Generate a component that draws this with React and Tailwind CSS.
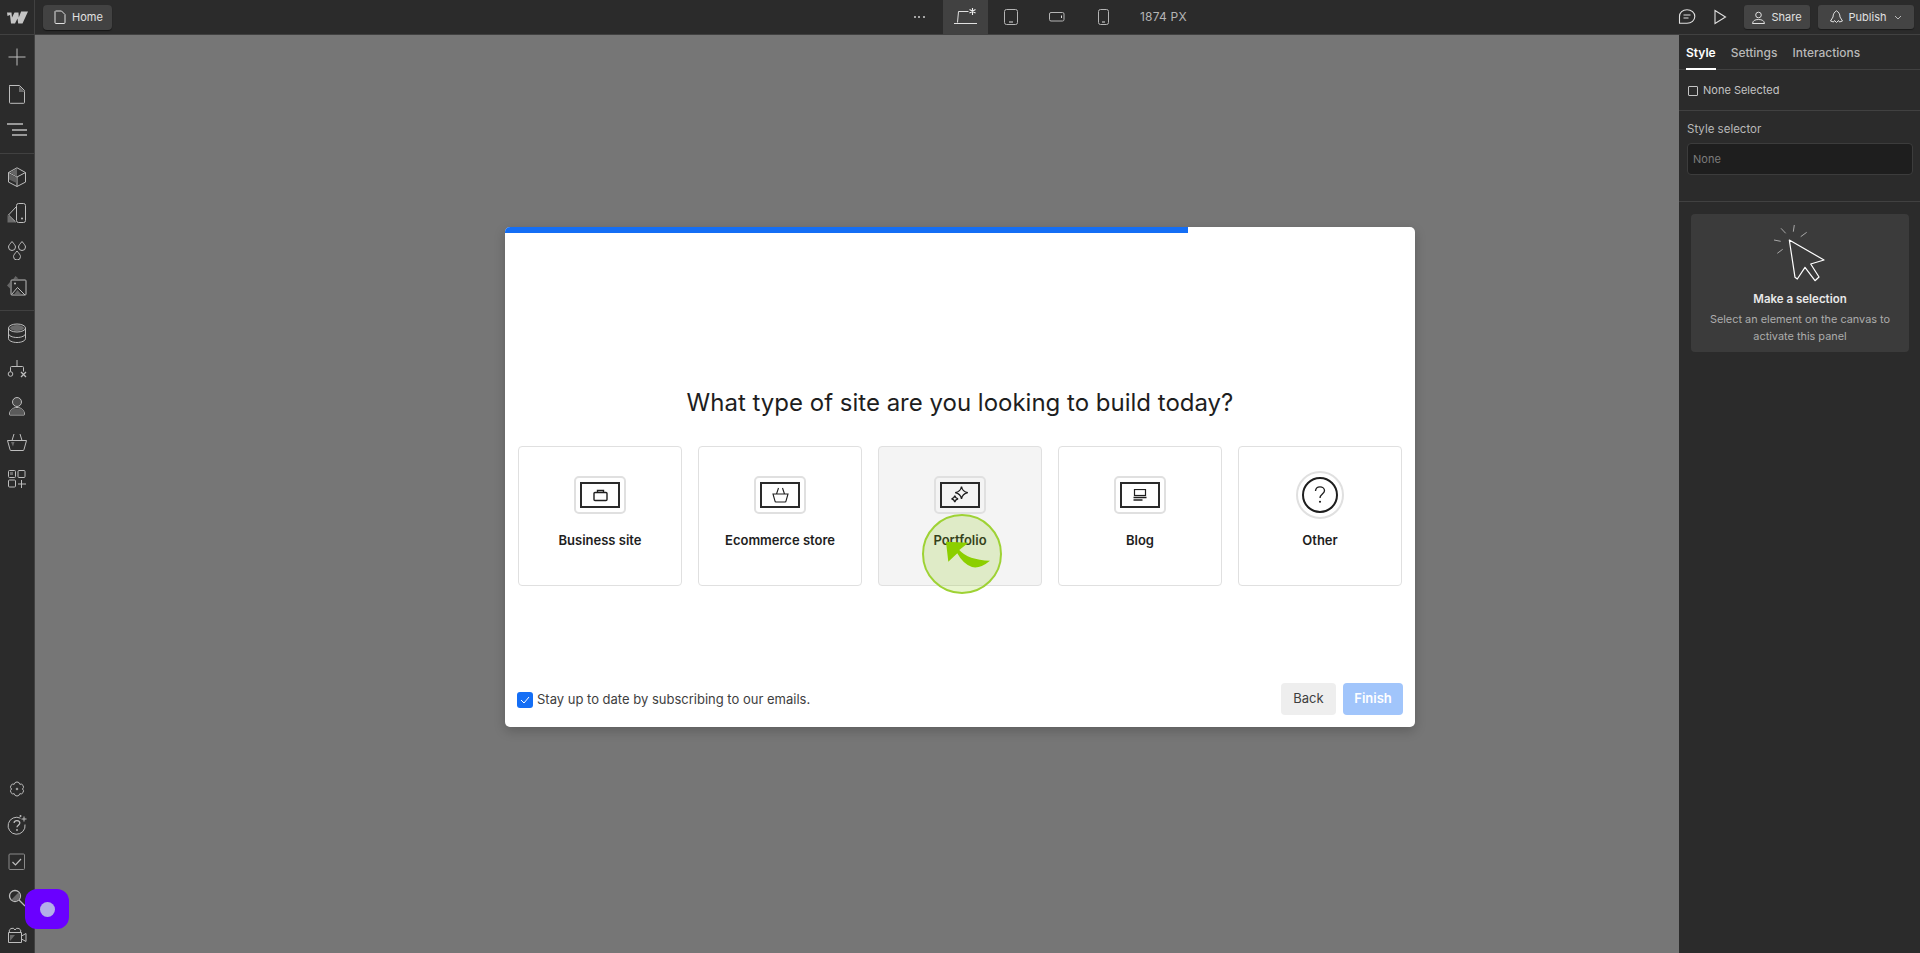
import React from 'react';

const Ic = ({ children, w = 20, h = 20, vb, className = '' }) => (
  <svg width={w} height={h} viewBox={vb || `0 0 ${w} ${h}`} fill="none" stroke="currentColor" strokeWidth="1" className={className}>
    {children}
  </svg>
);

const SideIcon = ({ children }) => (
  <div className="flex h-[36.5px] w-full items-center justify-center text-[#bdbdbd]">
    <Ic>{children}</Ic>
  </div>
);

const topIcons = [
  <path d="M10 1.500v17M1.500 10h17" />,
  <>
    <path d="M2.500 1.500h10l5 5v12a.8.8 0 0 1-.8.8H3.300a.8.8 0 0 1-.8-.8V2.300a.8.8 0 0 1 .8-.8z" />
    <path d="M12 2v6h6z" fill="#6b6b6b" stroke="none" />
  </>,
  <path d="M0 4h16M5 10h15M5 15h15" strokeWidth="1.300" />,
];

const assetIcons = [
  <>
    <path d="M10 .8l8.500 4.700v9.600L10 19.500l-8.500-4.400V5.500z" />
    <path d="M1.500 5.500L10 10l8.500-4.500M10 10v9.500" />
    <path d="M10 1.500L3 5.500 10 9.500z" fill="#666" stroke="none" />
    <path d="M2 6.500l7.500 4v5.500L2 12.500z" fill="#5c5c5c" stroke="none" />
  </>,
  <>
    <path d="M.5 19.500h8.500L.5 12z" fill="#6b6b6b" stroke="none" />
    <rect x="9.500" y=".5" width="9" height="19" rx="2" />
    <path d="M9.500 3.500L1.500 12l7 6.800" />
    <circle cx="15" cy="15.500" r="1" fill="currentColor" stroke="none" />
  </>,
  <>
    <path d="M5 1.500c2 2.500 3.500 4 3.500 5.500a3.500 3.500 0 0 1-7 0c0-1.500 1.500-3 3.500-5.500z" />
    <path d="M15 1.500c2 2.500 3.500 4 3.500 5.500a3.500 3.500 0 0 1-7 0c0-1.500 1.500-3 3.500-5.500z" />
    <path d="M10 11c2 2.500 3.500 4 3.500 5.500a3.500 3.500 0 0 1-7 0c0-1.500 1.500-3 3.500-5.500z" />
  </>,
  <>
    <path d="M6 3.500L8.500 0l3 2.500zM3 6l-3 3.500 3 3z" fill="#666" stroke="none" />
    <rect x="4" y="4" width="15" height="15" rx=".8" />
    <path d="M4.500 18.500l6-7 7.500 7.500" />
    <path d="M7 18.500l3.500-4.500 4 4.500z" fill="#666" stroke="none" />
    <circle cx="8" cy="7.500" r="1" fill="currentColor" stroke="none" />
  </>,
];

const cmsIcons = [
  <>
    <ellipse cx="10" cy="5" rx="8.500" ry="4" />
    <ellipse cx="10" cy="5" rx="7" ry="3" fill="#6a6a6a" stroke="none" />
    <path d="M1.500 5v10.500c0 2.200 3.800 4 8.500 4s8.500-1.800 8.500-4V5M1.500 10.500c0 2.200 3.800 4 8.500 4s8.500-1.800 8.500-4" />
  </>,
  <>
    <path d="M10 1v6M3.500 12.500V8.500a1 1 0 0 1 1-1h11a1 1 0 0 1 1 1v4" />
    <circle cx="3.500" cy="15" r="2.300" />
    <path d="M14 13l5 5M19 13l-5 5" strokeWidth="1.300" />
  </>,
  <>
    <circle cx="10" cy="6" r="4.500" fill="#4c4c4c" />
    <path d="M2.500 18.500c0-4 3-7 7.500-7s7.500 3 7.500 7a.5.5 0 0 1-.5.5H3a.5.5 0 0 1-.5-.5z" />
    <path d="M3 18.500h14c0-3-1-4.500-3-6H6c-2 1.500-3 3-3 6z" fill="#5a5a5a" stroke="none" />
  </>,
  <>
    <path d="M.5 8.500h19l-2.500 9a1 1 0 0 1-1 1H4a1 1 0 0 1-1-1z" />
    <path d="M5 8.500L7 2M15 8.500L13 2" />
    <path d="M4 10h3.500l-1.500 4.500z" fill="#6a6a6a" stroke="none" />
  </>,
  <>
    <rect x="1.500" y="1.500" width="7" height="7" rx="1" />
    <rect x="3" y="3" width="3" height="3" fill="#6a6a6a" stroke="none" />
    <rect x="11" y="1.500" width="7" height="7" rx="1" />
    <rect x="1.500" y="11" width="7" height="7" rx="1" />
    <path d="M14.500 11v8M11 15h8" />
  </>,
];

const bottomIcons = [
  <>
    <path d="M15.500 10A2.800 2.800 0 0 1 12.750 14.760 2.800 2.800 0 0 1 7.250 14.760 2.800 2.800 0 0 1 4.500 10 2.800 2.800 0 0 1 7.250 5.240 2.800 2.800 0 0 1 12.750 5.240 2.800 2.800 0 0 1 15.500 10z" />
    <path d="M8.800 10h2.400M10 8.800v2.400" />
  </>,
  <>
    <path d="M13.500 3.200A8.500 8.500 0 1 0 18 9.500" />
    <path d="M7 7.800c.3-1.500 1.500-2.300 3-2.200 1.600.1 2.800 1 2.800 2.500 0 2-2.800 2.300-2.800 4.200" strokeWidth="1.300" />
    <circle cx="10" cy="15" r=".9" fill="currentColor" stroke="none" />
    <circle cx="13.500" cy="1" r="1" fill="currentColor" stroke="none" />
    <path d="M17 1.500v5M14.500 4h5" />
  </>,
  <>
    <rect x="1.500" y="1.500" width="15.500" height="15.500" rx="1" stroke="#8a8a8a" transform="translate(.5 .5)" />
    <path d="M5.500 10l3 3 5.500-6" strokeWidth="1.200" />
  </>,
  <>
    <circle cx="8" cy="8" r="5.500" strokeWidth="1.300" />
    <path d="M4.500 11.500L11.500 4.500A5 5 0 0 1 11.500 11.500 5 5 0 0 1 4.500 11.500z" fill="#6a6a6a" stroke="none" />
    <path d="M12 12l6 6" strokeWidth="1.300" />
  </>,
  <>
    <path d="M3 16V10h5z" fill="#6a6a6a" stroke="none" />
    <path d="M1.500 7.500h13v10h-13zM2.500 7.500a3 3 0 0 1 5.500-2.500 3 3 0 0 1 5.500 2.500M14.500 11l4.500-2.500v8L14.500 14" />
  </>,
];

const Topbar = () => (
  <header className="flex h-[35px] shrink-0 items-center border-b border-[#414141] bg-[#2b2b2b] text-[#e0e0e0]">
    <div className="flex h-full w-[35px] shrink-0 items-center justify-center border-r border-[#414141]">
      <svg width="21" height="14" viewBox="0 0 21 14" fill="#c4c4c4">
        <path d="M0 2.500h4.500l.5 5 2.500-5h4l.3 5 2.300-6H21l-5.500 12h-4.300l-.7-5-2.500 5H4l-1-8.500L.5 6z" />
      </svg>
    </div>
    <div className="ml-2 flex h-[25px] w-[69px] items-center gap-[6px] rounded-[4px] bg-[#424242] pl-[11px] text-[11px] shadow-[0_1px_1px_rgba(0,0,0,0.5)]">
      <Ic w={12} h={14}>
        <path d="M1.500 1h6l3.500 3.500v8a1 1 0 0 1-1 1h-8a1 1 0 0 1-1-1v-11z" />
      </Ic>
      <span>Home</span>
    </div>
    <div className="ml-[797px] flex h-full items-center">
      <div className="flex w-[34px] items-center justify-center gap-[2.500px] pr-[14px]">
        <span className="h-[2px] w-[2px] rounded-full bg-[#cfcfcf]" />
        <span className="h-[2px] w-[2px] rounded-full bg-[#cfcfcf]" />
        <span className="h-[2px] w-[2px] rounded-full bg-[#cfcfcf]" />
      </div>
      <div className="flex h-full w-[45px] items-center justify-center bg-[#414141]">
        <Ic w={24} h={18}>
          <path d="M3.500 14.500l1-11h10M0 15.500h23" />
          <path d="M18.500 0v7M15.500 1.500l6 3.500M21.500 1.500l-6 3.500" strokeWidth="1.100" stroke="#eee" />
        </Ic>
      </div>
      <div className="flex h-full w-[46px] items-center justify-center">
        <Ic w={14} h={16}>
          <rect x=".5" y=".5" width="13" height="15" rx="2" stroke="#b5b5b5" />
          <path d="M5 13h4" />
        </Ic>
      </div>
      <div className="flex h-full w-[46px] items-center justify-center">
        <Ic w={16} h={10}>
          <rect x=".5" y=".5" width="14.500" height="8.500" rx="1.500" stroke="#b5b5b5" />
          <path d="M12.500 3.500v2.500" />
        </Ic>
      </div>
      <div className="flex h-full w-[46px] items-center justify-center">
        <Ic w={11} h={16}>
          <rect x=".5" y=".5" width="10" height="15" rx="2" stroke="#b5b5b5" />
          <path d="M4 13h3" />
        </Ic>
      </div>
      <span className="ml-[14px] text-[12px] tracking-[0.2px] text-[#b4b4b4]">1874 PX</span>
    </div>
    <div className="ml-auto flex items-center">
      <Ic w={18} h={16}>
        <path d="M9 .8c4.400 0 7.800 2.800 7.800 6.700 0 3.900-3.400 6.700-7.800 6.700H1.500V7.500C1.500 3.600 4.600.8 9 .8z" strokeWidth="1.100" />
        <path d="M5.500 6h7M5.500 9h5" />
      </Ic>
      <Ic w={13} h={16} className="ml-[18px]">
        <path d="M1 1.500l10.500 6.500L1 14.500z" strokeWidth="1.100" />
      </Ic>
      <div className="ml-[17px] flex h-[24px] w-[66px] items-center justify-center gap-[6px] rounded-[3px] bg-[#444] text-[11px] shadow-[0_1px_1px_rgba(0,0,0,0.4)]">
        <Ic w={13} h={13}>
          <circle cx="6.500" cy="4" r="2.800" />
          <path d="M.5 12.500c.5-3 2.500-4 6-4s5.500 1 6 4z" />
        </Ic>
        <span>Share</span>
      </div>
      <div className="ml-2 mr-[6px] flex h-[24px] w-[96px] items-center justify-center gap-[6px] rounded-[3px] bg-[#444] text-[11px] shadow-[0_1px_1px_rgba(0,0,0,0.4)]">
        <Ic w={13} h={14}>
          <path d="M6.500.8C8.500 2 10 4 10 7l2.500 4-3 1-1-1.500-2 2-2-2-1 1.500-3-1L3 7C3 4 4.500 2 6.500.8z" />
        </Ic>
        <span>Publish</span>
        <svg width="8" height="5" viewBox="0 0 8 5" fill="none" stroke="#bbb" className="ml-[2px]">
          <path d="M1 1l3 3 3-3" />
        </svg>
      </div>
    </div>
  </header>
);

const Sidebar = () => (
  <aside className="flex w-[35px] shrink-0 flex-col border-r border-[#414141] bg-[#2b2b2b]">
    <div className="border-b border-[#414141] pb-[4px] pt-[4px]">
      {topIcons.map((icon, i) => <SideIcon key={i}>{icon}</SideIcon>)}
    </div>
    <div className="border-b border-[#414141] pb-[5px] pt-[5px]">
      {assetIcons.map((icon, i) => <SideIcon key={i}>{icon}</SideIcon>)}
    </div>
    <div className="pt-[4px]">
      {cmsIcons.map((icon, i) => <SideIcon key={i}>{icon}</SideIcon>)}
    </div>
    <div className="mt-auto">
      {bottomIcons.map((icon, i) => <SideIcon key={i}>{icon}</SideIcon>)}
    </div>
  </aside>
);

const Inspector = () => (
  <aside className="flex w-[241px] shrink-0 flex-col bg-[#2b2b2b] text-[12px] text-[#d0d0d0]">
    <div className="flex h-[35px] items-center gap-[15px] border-b border-[#414141] pl-[7px]">
      <span className="relative flex h-full items-center pt-[1px] font-semibold text-white">
        Style
        <span className="absolute -bottom-px left-0 h-[2px] w-full bg-white" />
      </span>
      <span className="pt-[1px] font-medium text-[#b8b8b8]">Settings</span>
      <span className="pt-[1px] font-medium text-[#b8b8b8]">Interactions</span>
    </div>
    <div className="flex h-[41px] items-center gap-[5px] border-b border-[#414141] pl-[9px] pt-[1px] text-[11px] text-[#c4c4c4]">
      <span className="h-[10px] w-[10px] rounded-[1px] border border-[#c4c4c4]" />
      None Selected
    </div>
    <div className="border-b border-[#414141] px-[8px] pb-[26px] pt-[10px]">
      <div className="text-[11.500px] leading-[16px] text-[#b8b8b8]">Style selector</div>
      <div className="mt-[6px] flex h-[32px] w-[226px] items-center rounded-[4px] border border-[#3c3c3c] bg-[#1e1e1e] pl-[5px] text-[11px] text-[#7c7c7c]">None</div>
    </div>
    <div className="ml-[12px] mt-[12px] flex h-[138px] w-[218px] flex-col items-center rounded-[4px] bg-[#3b3b3b] pt-[11px] text-center">
      <svg width="52" height="58" viewBox="0 0 52 58" fill="none" stroke="#fff" strokeLinejoin="round">
        <path d="M15.300 15L50 35 36.700 39 45 52 41 55.700 31 42.300 23.300 54 21 52.300z" strokeWidth="1.200" />
        <path d="M7 3.300l4.700 5M20.300 0l-1 6.700M32.700 7.300l-6 4.400M0 15l6.700 1.300M3.300 28.300l5.400-4" stroke="#a8a8a8" />
      </svg>
      <div className="mt-[8px] text-[11.500px] font-semibold leading-[16px] text-[#e8e8e8]">Make a selection</div>
      <div className="mt-[4px] w-[200px] text-[10.900px] leading-[16.500px] text-[#acacac]">Select an element on the canvas to activate this panel</div>
    </div>
  </aside>
);

const Frame = ({ children }) => (
  <div className="flex h-[38px] w-[52px] items-center justify-center rounded-[5px] border-2 border-[#e0e0e0]">
    <div className="flex h-[26px] w-[40px] items-center justify-center border-2 border-[#2a2a2a]">
      {children}
    </div>
  </div>
);

const cards = [
  {
    label: 'Business site',
    icon: (
      <Frame>
        <svg width="15" height="13" viewBox="0 0 15 13" fill="none" stroke="#1e1e1e" strokeWidth="1.400">
          <rect x="1" y="3.500" width="13" height="8" rx="1" />
          <path d="M4.500 3.500V1.500h6v2" />
        </svg>
      </Frame>
    ),
  },
  {
    label: 'Ecommerce store',
    icon: (
      <Frame>
        <svg width="17" height="16" viewBox="0 0 17 16" fill="none" stroke="#1e1e1e" strokeWidth="1.100">
          <path d="M1 7h15l-2 7a1 1 0 0 1-1 1H4a1 1 0 0 1-1-1zM4.500 7l2-6M12.500 7l-2-6" />
        </svg>
      </Frame>
    ),
  },
  {
    label: 'Portfolio',
    hover: true,
    icon: (
      <Frame>
        <svg width="18" height="18" viewBox="0 0 18 18" fill="none" stroke="#1e1e1e" strokeWidth="1.300">
          <path d="M10.500.5c.6 3.400 2.400 5.400 6.300 6.200-3.900.8-5.700 2.800-6.300 6.200-.6-3.400-2.400-5.400-6.300-6.200 3.900-.8 5.700-2.800 6.300-6.200z" />
          <path d="M3.800 9.500c.3 1.800 1.300 2.900 3.300 3.300-2 .4-3 1.500-3.300 3.300-.3-1.800-1.300-2.900-3.300-3.300 2-.4 3-1.500 3.300-3.300z" />
        </svg>
      </Frame>
    ),
  },
  {
    label: 'Blog',
    icon: (
      <Frame>
        <svg width="14" height="13" viewBox="0 0 14 13" fill="none" stroke="#1e1e1e" strokeWidth="1.200">
          <rect x="1.500" y=".5" width="11" height="6" />
          <path d="M.5 8.500h13M.5 11h9" strokeWidth="1.300" />
        </svg>
      </Frame>
    ),
  },
  {
    label: 'Other',
    icon: (
      <div className="flex h-[48px] w-[48px] items-center justify-center rounded-full border-2 border-[#e0e0e0]">
        <div className="flex h-[36px] w-[36px] items-center justify-center rounded-full border-2 border-[#1e1e1e]">
          <svg width="12" height="18" viewBox="0 0 12 20" fill="none" stroke="#1e1e1e" strokeWidth="1.500">
            <path d="M1 5.500C1.200 2.800 3.200 1 6 1c2.800 0 5 1.800 5 4.300 0 3.400-5 4-5 8" />
            <circle cx="6" cy="17.500" r="1.200" fill="#1e1e1e" stroke="none" />
          </svg>
        </div>
      </div>
    ),
  },
];

const Modal = () => (
  <div className="absolute inset-0 flex items-center justify-center">
    <div className="relative mt-[1px] flex h-[500px] w-[910px] flex-col overflow-hidden rounded-[5px] bg-white shadow-[0_4px_12px_rgba(0,0,0,0.2)]">
      <div className="h-[6px] w-[683px] bg-[#146ef5]" />
      <div className="mt-[154px] text-center text-[24px] leading-[32px] text-[#1e1e1e]">What type of site are you looking to build today?</div>
      <div className="mt-[27px] flex gap-[16px] px-[13px]">
        {cards.map((card) => (
          <div
            key={card.label}
            className={`flex h-[140px] w-[164px] flex-col items-center rounded-[4px] border border-[#e0e0e0] text-[13px] font-[560] text-[#1e1e1e] ${card.hover ? 'bg-[#f4f4f4]' : 'bg-white'}`}
          >
            <div className="mt-[24px] flex h-[48px] w-full items-center justify-center">{card.icon}</div>
            <span className="mt-[12px]">{card.label}</span>
          </div>
        ))}
      </div>
      <div className="mt-auto flex items-center px-[12px] pb-[12px]">
        <span className="mt-[1px] flex h-[16px] w-[16px] items-center justify-center rounded-[3px] bg-[#146ef5]">
          <svg width="10" height="8" viewBox="0 0 10 8" fill="none" stroke="#fff">
            <path d="M1 4l3 3 5-6" />
          </svg>
        </span>
        <span className="ml-[4px] mt-[1px] text-[13px] text-[#3e3e3e]">Stay up to date by subscribing to our emails.</span>
        <div className="ml-auto flex gap-[7px] text-[13px]">
          <div className="flex h-[32px] w-[55px] items-center justify-center rounded-[4px] bg-[#eeeeee] text-[#3e3e3e]">Back</div>
          <div className="flex h-[32px] w-[60px] items-center justify-center rounded-[4px] bg-[#a1c5fb] font-semibold text-white">Finish</div>
        </div>
      </div>
      <div className="absolute left-[417px] top-[287px] h-[80px] w-[80px] rounded-full border-2 border-[#9ed234] bg-[rgba(140,200,20,0.2)]">
        <svg width="80" height="80" viewBox="0 0 80 80" className="-m-[2px]">
          <path d="M24 27.700L46.300 28.700 37.300 36Q46 46 68 46.700 58 55 50 53 41 50 35.300 39.300L26.300 47.700z" fill="#8ccf00" />
        </svg>
      </div>
    </div>
  </div>
);

export default function App() {
  return (
    <div className="relative flex h-[953px] w-[1920px] flex-col overflow-hidden font-['Inter',sans-serif]">
      <Topbar />
      <div className="flex flex-1">
        <Sidebar />
        <main className="flex-1 bg-[#767676]" />
        <Inspector />
      </div>
      <Modal />
      <div className="absolute left-[25px] top-[889px] flex h-[40px] w-[44px] items-center justify-center rounded-[12px] bg-[#6a00ff]">
        <span className="h-[15px] w-[15px] rounded-full bg-[#b4aee8]" />
      </div>
    </div>
  );
}
